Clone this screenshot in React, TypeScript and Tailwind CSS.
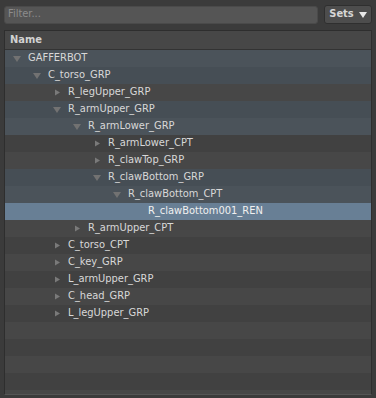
const rows: { name: string; level: number; arrow: 'open' | 'closed' | 'none'; kind: 'blue' | 'sel' | 'plain' }[] = [
  { name: 'GAFFERBOT', level: 0, arrow: 'open', kind: 'blue' },
  { name: 'C_torso_GRP', level: 1, arrow: 'open', kind: 'blue' },
  { name: 'R_legUpper_GRP', level: 2, arrow: 'closed', kind: 'plain' },
  { name: 'R_armUpper_GRP', level: 2, arrow: 'open', kind: 'blue' },
  { name: 'R_armLower_GRP', level: 3, arrow: 'open', kind: 'blue' },
  { name: 'R_armLower_CPT', level: 4, arrow: 'closed', kind: 'plain' },
  { name: 'R_clawTop_GRP', level: 4, arrow: 'closed', kind: 'plain' },
  { name: 'R_clawBottom_GRP', level: 4, arrow: 'open', kind: 'blue' },
  { name: 'R_clawBottom_CPT', level: 5, arrow: 'open', kind: 'blue' },
  { name: 'R_clawBottom001_REN', level: 6, arrow: 'none', kind: 'sel' },
  { name: 'R_armUpper_CPT', level: 3, arrow: 'closed', kind: 'plain' },
  { name: 'C_torso_CPT', level: 2, arrow: 'closed', kind: 'plain' },
  { name: 'C_key_GRP', level: 2, arrow: 'closed', kind: 'plain' },
  { name: 'L_armUpper_GRP', level: 2, arrow: 'closed', kind: 'plain' },
  { name: 'C_head_GRP', level: 2, arrow: 'closed', kind: 'plain' },
  { name: 'L_legUpper_GRP', level: 2, arrow: 'closed', kind: 'plain' },
];

function Arrow({ dir }: { dir: 'open' | 'closed' | 'none' }) {
  if (dir === 'none') return <span className="w-[16px]" />;
  return (
    <svg width="16" height="17" viewBox="0 0 16 17" className="shrink-0">
      {dir === 'open' ? (
        <path d="M3 6 L11 6 L7 12 Z" fill="#727272" />
      ) : (
        <path d="M5 5.5 L10 8.5 L5 11.5 Z" fill="#7a7a7a" />
      )}
    </svg>
  );
}

export default function App() {
  const empty = [0, 1, 2, 3];
  return (
    <div
      className="flex h-[398px] w-[376px] flex-col bg-[#3b3b3b] text-[11px]"
      style={{ fontFamily: '"DejaVu Sans Condensed", "DejaVu Sans", sans-serif', fontStretch: 'condensed' }}
    >
      {/* Filter bar */}
      <div className="flex items-center gap-[6px] px-[4px] pt-[5px]">
        <div className="flex h-[18px] flex-1 items-center rounded-[3px] border border-[#4a4a4a] bg-[#555555] px-[3px] text-[#8c8c8c]">
          Filter...
        </div>
        <div className="flex h-[19px] w-[48px] items-center justify-center gap-[5px] rounded-[3px] border border-[#2f2f2f] bg-[#4d4d4d] font-bold text-[#d6d6d6]">
          Sets
          <svg width="8" height="8" viewBox="0 0 8 8">
            <path d="M0 1 L8 1 L4 7 Z" fill="#e8e8e8" />
          </svg>
        </div>
      </div>

      {/* Tree */}
      <div className="mx-[4px] mt-[6px] flex flex-col border border-[#2e2e2e] border-b-[#555555]">
        <div className="flex h-[19px] items-center border-b border-[#333333] bg-[#474747] pl-[5px] font-bold text-[#d2d2d2]">
          Name
        </div>
        {rows.map((r, i) => {
          const odd = i % 2 === 0;
          const bg =
            r.kind === 'sel'
              ? 'bg-[#687f95] text-[#f0f0f0]'
              : r.kind === 'blue'
                ? odd
                  ? 'bg-[#4b535a] text-[#d8d8d8]'
                  : 'bg-[#464e55] text-[#d8d8d8]'
                : odd
                  ? 'bg-[#474747] text-[#d8d8d8]'
                  : 'bg-[#414141] text-[#d8d8d8]';
          return (
            <div key={r.name} className={`flex h-[17px] items-center ${bg}`} style={{ paddingLeft: 5 + r.level * 20 }}>
              <Arrow dir={r.arrow} />
              <span className="ml-[2px] whitespace-nowrap">{r.name}</span>
            </div>
          );
        })}
        {empty.map((e) => (
          <div key={e} className={`h-[17px] ${e % 2 === 0 ? 'bg-[#474747]' : 'bg-[#414141]'}`} />
        ))}
        <div className="h-[4px] bg-[#474747]" />
      </div>
    </div>
  );
}
